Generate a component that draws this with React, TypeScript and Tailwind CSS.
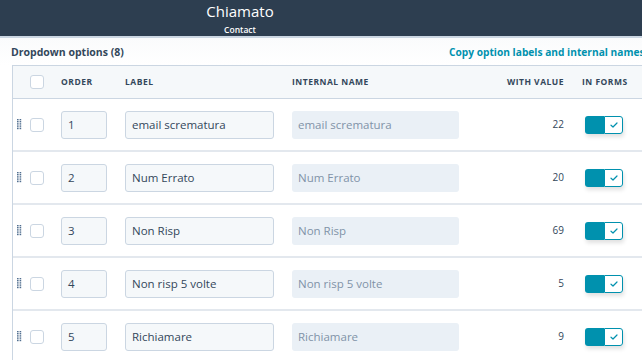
import React from "react";

const rows = [
  { order: "1", label: "email scrematura", value: "22" },
  { order: "2", label: "Num Errato", value: "20" },
  { order: "3", label: "Non Risp", value: "69" },
  { order: "4", label: "Non risp 5 volte", value: "5" },
  { order: "5", label: "Richiamare", value: "9" },
];

function Handle() {
  return (
    <svg width="5" height="11" viewBox="0 0 5 11" className="block">
      {[0, 1, 2, 3, 4, 5].map((i) => (
        <g key={i} fill="#516f90">
          <rect x="0" y={i * 1.8} width="1.6" height="1.2" />
          <rect x="2.6" y={i * 1.8} width="1.6" height="1.2" />
        </g>
      ))}
    </svg>
  );
}

function Checkbox() {
  return <div className="w-[14px] h-[14px] rounded-[3px] border border-[#cbd6e2] bg-white shrink-0" />;
}

function Toggle() {
  return (
    <div className="flex w-[38px] h-[18px] rounded-[3px] shadow-[1px_3px_4px_rgba(0,0,0,0.12)]">
      <div className="w-[19px] h-full bg-[#0091ae] rounded-l-[3px]" />
      <div className="flex-1 h-full bg-white border border-[#0091ae] rounded-r-[3px] flex items-center justify-center">
        <svg width="8" height="6" viewBox="0 0 8 6">
          <path d="M1 3.2 L3 5 L7 1" fill="none" stroke="#0091ae" strokeWidth="1.2" strokeLinecap="round" strokeLinejoin="round" />
        </svg>
      </div>
    </div>
  );
}

export default function App() {
  return (
    <div className="w-[642px] h-[360px] overflow-hidden bg-white" style={{ fontFamily: '"Open Sans", "Noto Sans", sans-serif' }}>
      <div className="h-[36px] bg-[#2d3e50] flex">
        <div className="w-[480px] flex flex-col items-center">
          <div className="text-[15px] leading-[18px] text-white mt-[2px]">Chiamato</div>
          <div className="text-[8.5px] leading-[10px] font-semibold text-white mt-[5px]">Contact</div>
        </div>
      </div>
      <div className="h-[2px] bg-[#cbd6e2]" />
      <div className="bg-gradient-to-b from-[#fafbfc] to-white">
        <div className="flex items-center h-[27px] pt-[3px] pl-[11px] whitespace-nowrap">
          <div className="w-[438px] shrink-0 text-[10.5px] font-bold text-[#33475b]">Dropdown options (8)</div>
          <div className="shrink-0 text-[10.2px] font-bold text-[#0091ae]">Copy option labels and internal names</div>
        </div>
      </div>
      <div className="ml-[12px] w-[680px] border-l border-t border-[#cbd6e2]">
        <div className="flex items-center h-[33px] bg-[#f5f8fa] border-b border-[#cbd6e2] pl-[4px] text-[8.5px] font-bold tracking-[0.5px] text-[#33475b] whitespace-nowrap">
          <div className="w-[5px]" />
          <div className="ml-[8px]"><Checkbox /></div>
          <div className="ml-[17px] w-[46px]">ORDER</div>
          <div className="ml-[18px] w-[149px]">LABEL</div>
          <div className="ml-[18px] w-[167px]">INTERNAL NAME</div>
          <div className="w-[105px] text-right">WITH VALUE</div>
          <div className="ml-[18px]">IN FORMS</div>
        </div>
        {rows.map((r) => (
          <div key={r.order} className="flex items-center h-[53px] border-b-2 border-[#e3e8ee] pl-[4px] text-[11.5px] text-[#33475b] whitespace-nowrap">
            <Handle />
            <div className="ml-[8px]"><Checkbox /></div>
            <div className="ml-[17px] w-[46px] h-[28px] rounded-[3px] border border-[#cbd6e2] bg-[#f5f8fa] flex items-center pl-[6px]">{r.order}</div>
            <div className="ml-[18px] w-[149px] h-[28px] rounded-[3px] border border-[#cbd6e2] bg-[#f5f8fa] flex items-center pl-[6px]">{r.label}</div>
            <div className="ml-[18px] w-[167px] h-[28px] rounded-[3px] bg-[#eaf0f6] flex items-center pl-[6px] text-[#8193a8]">{r.label}</div>
            <div className="w-[105px] text-right text-[10px]">{r.value}</div>
            <div className="ml-[21px]"><Toggle /></div>
          </div>
        ))}
      </div>
    </div>
  );
}
